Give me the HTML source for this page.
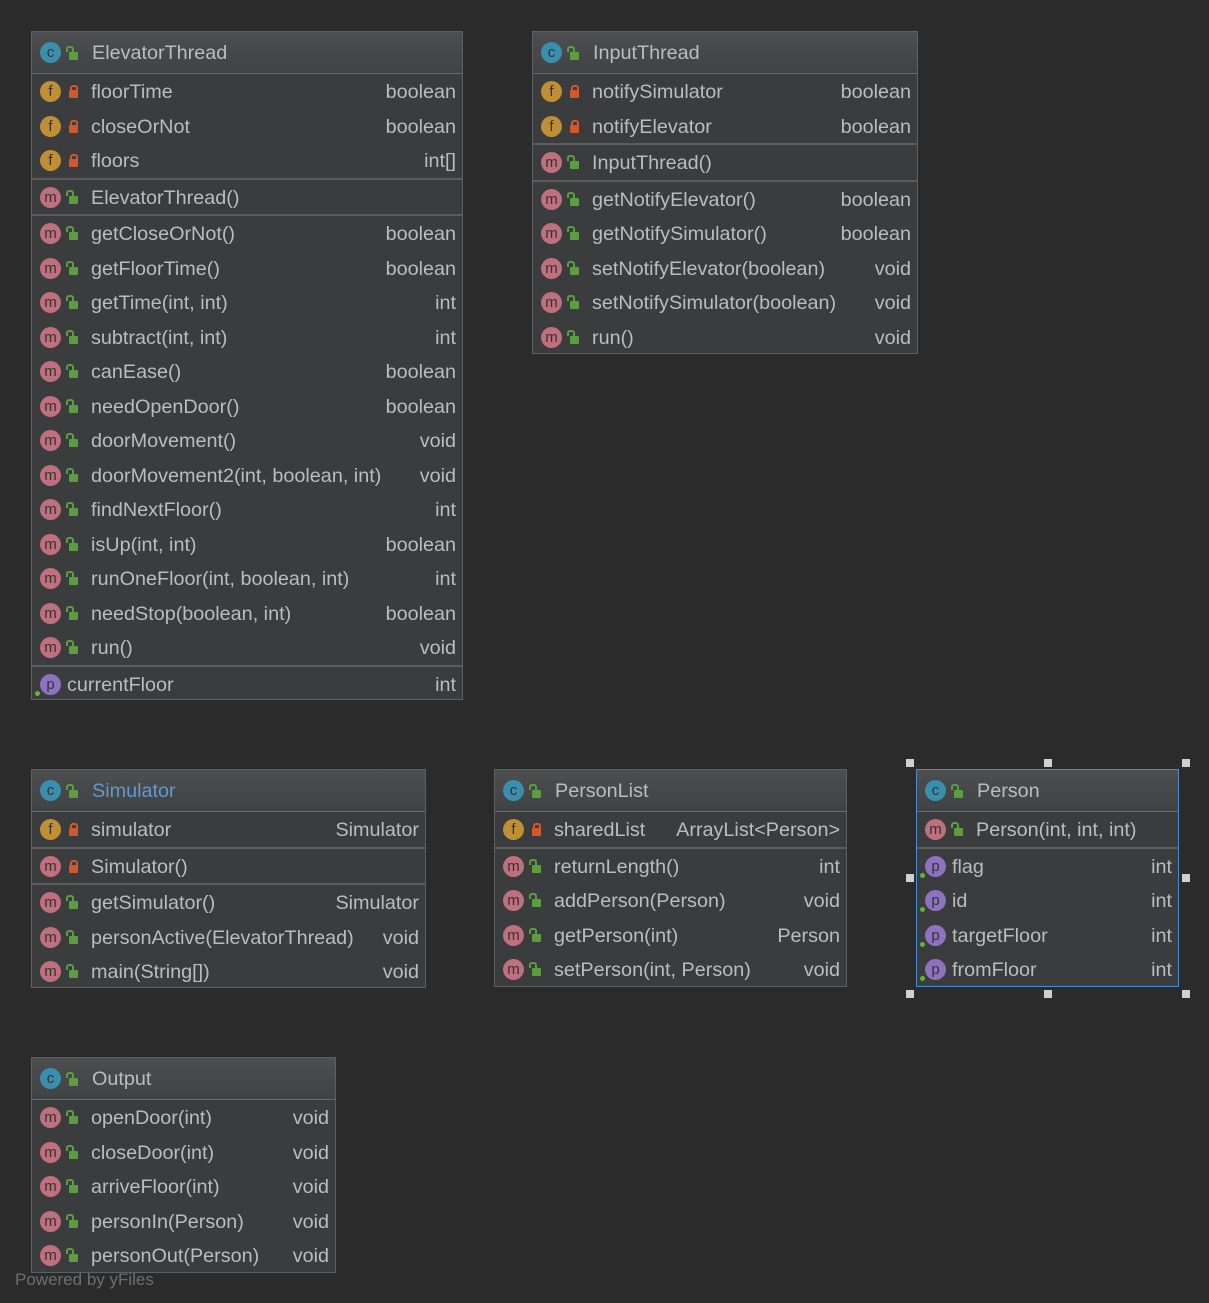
<!DOCTYPE html>
<html><head><meta charset="utf-8"><style>
body{margin:0;width:1209px;height:1303px;background:#2b2b2b;position:relative;overflow:hidden;font-family:"Liberation Sans",sans-serif;color:#bcbcbc;font-size:19.8px}
.b{position:absolute;background:#3a3c3e;border:1px solid #5d5f61;box-sizing:border-box}
.h{height:42px;border-bottom:1px solid #6a6a6a;background:linear-gradient(#4c4e50,#404244);position:relative;box-sizing:border-box}
.h .n{position:absolute;left:60px;top:10px}
.s{border-top:2px solid #5c5c5c}
.h+.s{border-top:none}
.r{height:34.5px;position:relative}
.n{position:absolute;left:59px;top:7px;white-space:nowrap}
.t{position:absolute;right:6px;top:7px}
.ic{position:absolute;left:8px;top:7px;width:21px;height:21px;border-radius:50%;color:#333;font-size:15px;line-height:22px;text-align:center;font-style:normal}
.h .ic{top:10px}
.c{background:#3a8fae}.f{background:#c08f34}.m{background:#c0707c}.p{background:#8e72bf}
.lk{position:absolute;left:37px;top:16px;width:9px;height:8px;border-radius:1px}
.lk:before{content:"";position:absolute;left:1px;top:-5px;width:4px;height:4px;border:2px solid;border-bottom:none;border-radius:3px 3px 0 0}
.o{background:#5a9e3e;color:#5a9e3e}.o:before{left:-3px;top:-6px}
.x{background:#d2582c;color:#d2582c}.x:before{left:1px}
.h .lk{top:20px}
.p~.n{left:35px}
.d{position:absolute;left:3px;top:24px;width:5px;height:5px;background:#5cb833;border-radius:50%}
.sel{position:absolute;width:8px;height:8px;background:#cfcfcf}
</style></head><body>

<div class="b" style="left:31px;top:31px;width:432px;height:669px">
<div class="h"><i class="ic c">c</i><b class="lk o"></b><span class="n">ElevatorThread</span></div>
<div class="s">
<div class="r"><i class="ic f">f</i><b class="lk x"></b><span class="n">floorTime</span><span class="t">boolean</span></div>
<div class="r"><i class="ic f">f</i><b class="lk x"></b><span class="n">closeOrNot</span><span class="t">boolean</span></div>
<div class="r"><i class="ic f">f</i><b class="lk x"></b><span class="n">floors</span><span class="t">int[]</span></div>
</div>
<div class="s"><div class="r"><i class="ic m">m</i><b class="lk o"></b><span class="n">ElevatorThread()</span></div></div>
<div class="s">
<div class="r"><i class="ic m">m</i><b class="lk o"></b><span class="n">getCloseOrNot()</span><span class="t">boolean</span></div>
<div class="r"><i class="ic m">m</i><b class="lk o"></b><span class="n">getFloorTime()</span><span class="t">boolean</span></div>
<div class="r"><i class="ic m">m</i><b class="lk o"></b><span class="n">getTime(int, int)</span><span class="t">int</span></div>
<div class="r"><i class="ic m">m</i><b class="lk o"></b><span class="n">subtract(int, int)</span><span class="t">int</span></div>
<div class="r"><i class="ic m">m</i><b class="lk o"></b><span class="n">canEase()</span><span class="t">boolean</span></div>
<div class="r"><i class="ic m">m</i><b class="lk o"></b><span class="n">needOpenDoor()</span><span class="t">boolean</span></div>
<div class="r"><i class="ic m">m</i><b class="lk o"></b><span class="n">doorMovement()</span><span class="t">void</span></div>
<div class="r"><i class="ic m">m</i><b class="lk o"></b><span class="n">doorMovement2(int, boolean, int)</span><span class="t">void</span></div>
<div class="r"><i class="ic m">m</i><b class="lk o"></b><span class="n">findNextFloor()</span><span class="t">int</span></div>
<div class="r"><i class="ic m">m</i><b class="lk o"></b><span class="n">isUp(int, int)</span><span class="t">boolean</span></div>
<div class="r"><i class="ic m">m</i><b class="lk o"></b><span class="n">runOneFloor(int, boolean, int)</span><span class="t">int</span></div>
<div class="r"><i class="ic m">m</i><b class="lk o"></b><span class="n">needStop(boolean, int)</span><span class="t">boolean</span></div>
<div class="r"><i class="ic m">m</i><b class="lk o"></b><span class="n">run()</span><span class="t">void</span></div>
</div>
<div class="s"><div class="r"><i class="ic p">p</i><span class="n">currentFloor</span><span class="t">int</span><i class="d"></i></div></div>
</div>

<div class="b" style="left:532px;top:31px;width:386px;height:323px">
<div class="h"><i class="ic c">c</i><b class="lk o"></b><span class="n">InputThread</span></div>
<div class="s">
<div class="r"><i class="ic f">f</i><b class="lk x"></b><span class="n">notifySimulator</span><span class="t">boolean</span></div>
<div class="r"><i class="ic f">f</i><b class="lk x"></b><span class="n">notifyElevator</span><span class="t">boolean</span></div>
</div>
<div class="s"><div class="r"><i class="ic m">m</i><b class="lk o"></b><span class="n">InputThread()</span></div></div>
<div class="s">
<div class="r"><i class="ic m">m</i><b class="lk o"></b><span class="n">getNotifyElevator()</span><span class="t">boolean</span></div>
<div class="r"><i class="ic m">m</i><b class="lk o"></b><span class="n">getNotifySimulator()</span><span class="t">boolean</span></div>
<div class="r"><i class="ic m">m</i><b class="lk o"></b><span class="n">setNotifyElevator(boolean)</span><span class="t">void</span></div>
<div class="r"><i class="ic m">m</i><b class="lk o"></b><span class="n">setNotifySimulator(boolean)</span><span class="t">void</span></div>
<div class="r"><i class="ic m">m</i><b class="lk o"></b><span class="n">run()</span><span class="t">void</span></div>
</div>
</div>

<div class="b" style="left:31px;top:769px;width:395px;height:219px">
<div class="h"><i class="ic c">c</i><b class="lk o"></b><span class="n" style="color:#5d9bd0">Simulator</span></div>
<div class="s"><div class="r"><i class="ic f">f</i><b class="lk x"></b><span class="n">simulator</span><span class="t">Simulator</span></div></div>
<div class="s"><div class="r"><i class="ic m">m</i><b class="lk x"></b><span class="n">Simulator()</span></div></div>
<div class="s">
<div class="r"><i class="ic m">m</i><b class="lk o"></b><span class="n">getSimulator()</span><span class="t">Simulator</span></div>
<div class="r"><i class="ic m">m</i><b class="lk o"></b><span class="n">personActive(ElevatorThread)</span><span class="t">void</span></div>
<div class="r"><i class="ic m">m</i><b class="lk o"></b><span class="n">main(String[])</span><span class="t">void</span></div>
</div>
</div>

<div class="b" style="left:494px;top:769px;width:353px;height:218px">
<div class="h"><i class="ic c">c</i><b class="lk o"></b><span class="n">PersonList</span></div>
<div class="s"><div class="r"><i class="ic f">f</i><b class="lk x"></b><span class="n">sharedList</span><span class="t">ArrayList&lt;Person&gt;</span></div></div>
<div class="s">
<div class="r"><i class="ic m">m</i><b class="lk o"></b><span class="n">returnLength()</span><span class="t">int</span></div>
<div class="r"><i class="ic m">m</i><b class="lk o"></b><span class="n">addPerson(Person)</span><span class="t">void</span></div>
<div class="r"><i class="ic m">m</i><b class="lk o"></b><span class="n">getPerson(int)</span><span class="t">Person</span></div>
<div class="r"><i class="ic m">m</i><b class="lk o"></b><span class="n">setPerson(int, Person)</span><span class="t">void</span></div>
</div>
</div>

<div class="b" style="left:916px;top:769px;width:263px;height:218px;border-color:#4a8ad0">
<div class="h"><i class="ic c">c</i><b class="lk o"></b><span class="n">Person</span></div>
<div class="s"><div class="r"><i class="ic m">m</i><b class="lk o"></b><span class="n">Person(int, int, int)</span></div></div>
<div class="s">
<div class="r"><i class="ic p">p</i><span class="n">flag</span><span class="t">int</span><i class="d"></i></div>
<div class="r"><i class="ic p">p</i><span class="n">id</span><span class="t">int</span><i class="d"></i></div>
<div class="r"><i class="ic p">p</i><span class="n">targetFloor</span><span class="t">int</span><i class="d"></i></div>
<div class="r"><i class="ic p">p</i><span class="n">fromFloor</span><span class="t">int</span><i class="d"></i></div>
</div>
</div>
<i class="sel" style="left:906px;top:759px"></i><i class="sel" style="left:1044px;top:759px"></i><i class="sel" style="left:1182px;top:759px"></i>
<i class="sel" style="left:906px;top:874px"></i><i class="sel" style="left:1182px;top:874px"></i>
<i class="sel" style="left:906px;top:990px"></i><i class="sel" style="left:1044px;top:990px"></i><i class="sel" style="left:1182px;top:990px"></i>

<div class="b" style="left:31px;top:1057px;width:305px;height:216px">
<div class="h"><i class="ic c">c</i><b class="lk o"></b><span class="n">Output</span></div>
<div class="s">
<div class="r"><i class="ic m">m</i><b class="lk o"></b><span class="n">openDoor(int)</span><span class="t">void</span></div>
<div class="r"><i class="ic m">m</i><b class="lk o"></b><span class="n">closeDoor(int)</span><span class="t">void</span></div>
<div class="r"><i class="ic m">m</i><b class="lk o"></b><span class="n">arriveFloor(int)</span><span class="t">void</span></div>
<div class="r"><i class="ic m">m</i><b class="lk o"></b><span class="n">personIn(Person)</span><span class="t">void</span></div>
<div class="r"><i class="ic m">m</i><b class="lk o"></b><span class="n">personOut(Person)</span><span class="t">void</span></div>
</div>
</div>

<div style="position:absolute;left:15px;top:1270px;font-size:17px;color:#6e6e6e">Powered by yFiles</div>
</body></html>
